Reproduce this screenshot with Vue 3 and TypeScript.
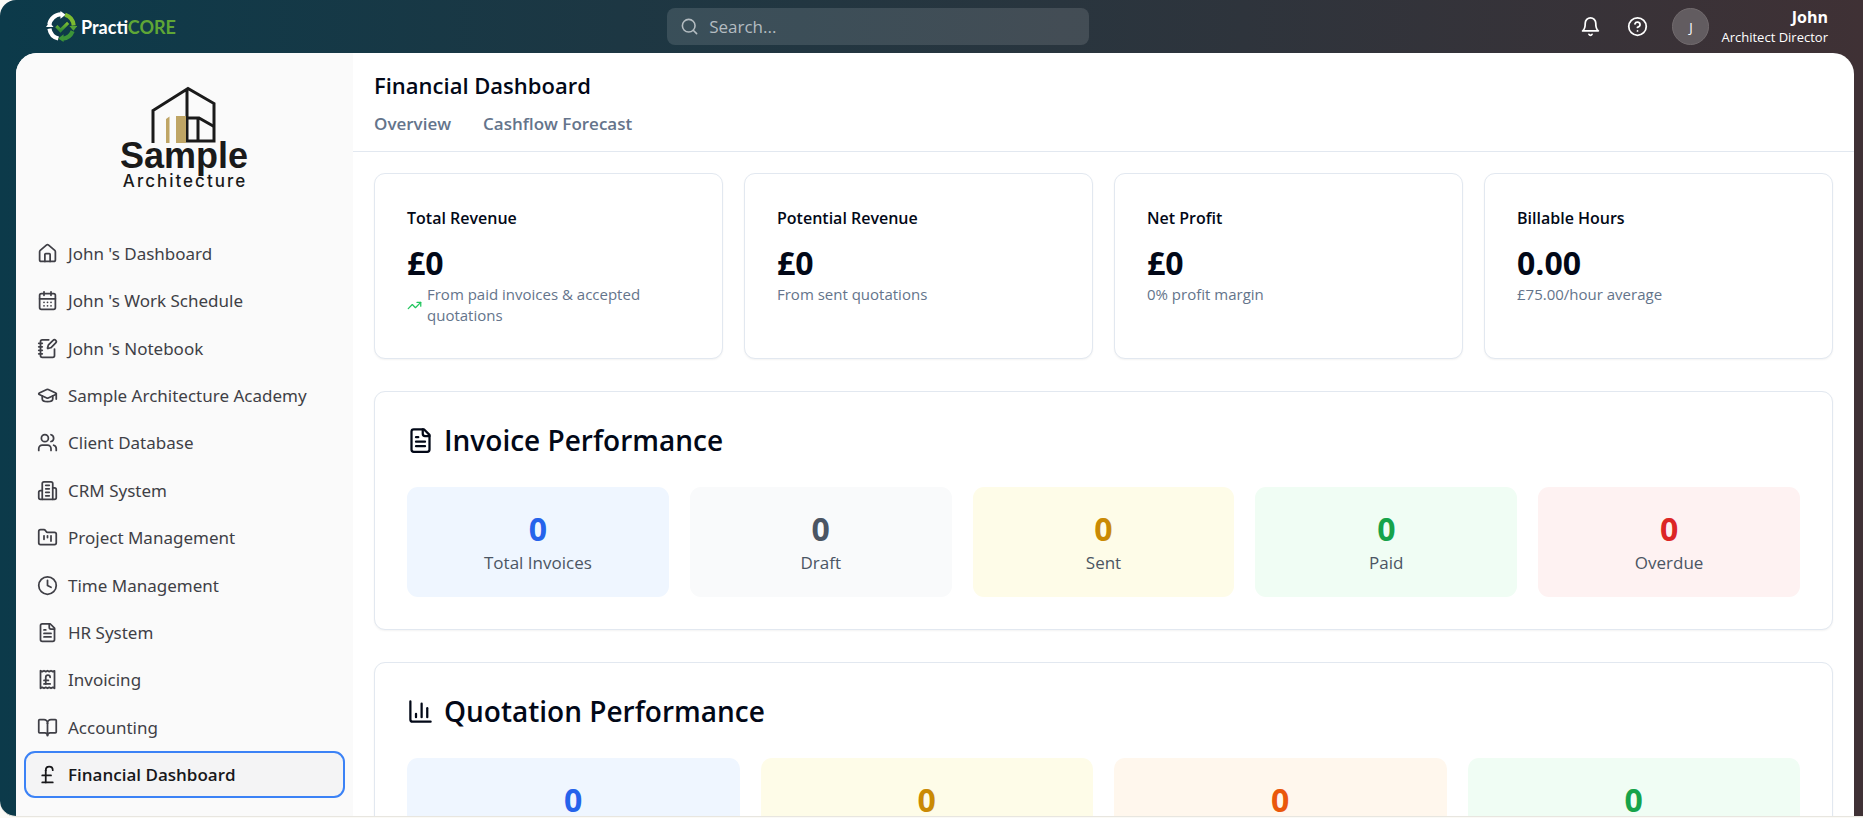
<script setup lang="ts">
import { ref } from 'vue'

interface NavItem {
  label: string
  icon: string[]
}
interface Stat {
  title: string
  value: string
  note: string
  trend?: boolean
}
interface Tile {
  label?: string
  value: number
  tone: string
}
interface Section {
  id: string
  title: string
  icon: string[]
  tiles: Tile[]
}

const fileText: string[] = [
  'M15 2H6a2 2 0 0 0-2 2v16a2 2 0 0 0 2 2h12a2 2 0 0 0 2-2V7Z',
  'M14 2v4a2 2 0 0 0 2 2h4',
  'M10 9H8',
  'M16 13H8',
  'M16 17H8',
]

const navItems: NavItem[] = [
  {
    label: "John 's Dashboard",
    icon: [
      'M15 21v-8a1 1 0 0 0-1-1h-4a1 1 0 0 0-1 1v8',
      'M3 10a2 2 0 0 1 .709-1.528l7-5.999a2 2 0 0 1 2.582 0l7 5.999A2 2 0 0 1 21 10v9a2 2 0 0 1-2 2H5a2 2 0 0 1-2-2z',
    ],
  },
  {
    label: "John 's Work Schedule",
    icon: [
      'M8 2v4', 'M16 2v4',
      'M5 4h14a2 2 0 0 1 2 2v14a2 2 0 0 1-2 2H5a2 2 0 0 1-2-2V6a2 2 0 0 1 2-2z',
      'M3 10h18', 'M8 14h.01', 'M12 14h.01', 'M16 14h.01', 'M8 18h.01', 'M12 18h.01', 'M16 18h.01',
    ],
  },
  {
    label: "John 's Notebook",
    icon: [
      'M13.4 2H6a2 2 0 0 0-2 2v16a2 2 0 0 0 2 2h12a2 2 0 0 0 2-2v-7.4',
      'M2 6h4', 'M2 10h4', 'M2 14h4', 'M2 18h4',
      'M21.378 5.626a1 1 0 1 0-3.004-3.004l-5.01 5.012a2 2 0 0 0-.506.854l-.837 2.87a.5.5 0 0 0 .62.62l2.87-.837a2 2 0 0 0 .854-.506z',
    ],
  },
  {
    label: 'Sample Architecture Academy',
    icon: [
      'M21.42 10.922a1 1 0 0 0-.019-1.838L12.83 5.18a2 2 0 0 0-1.66 0L2.6 9.08a1 1 0 0 0 0 1.832l8.57 3.908a2 2 0 0 0 1.66 0z',
      'M22 10v6', 'M6 12.5V16a6 3 0 0 0 12 0v-3.5',
    ],
  },
  {
    label: 'Client Database',
    icon: [
      'M16 21v-2a4 4 0 0 0-4-4H6a4 4 0 0 0-4 4v2',
      'M9 3a4 4 0 1 0 0 8a4 4 0 1 0 0-8',
      'M22 21v-2a4 4 0 0 0-3-3.87', 'M16 3.13a4 4 0 0 1 0 7.75',
    ],
  },
  {
    label: 'CRM System',
    icon: [
      'M6 22V4a2 2 0 0 1 2-2h8a2 2 0 0 1 2 2v18Z',
      'M6 12H4a2 2 0 0 0-2 2v6a2 2 0 0 0 2 2h2',
      'M18 9h2a2 2 0 0 1 2 2v9a2 2 0 0 1-2 2h-2',
      'M10 6h4', 'M10 10h4', 'M10 14h4', 'M10 18h4',
    ],
  },
  {
    label: 'Project Management',
    icon: [
      'M4 20h16a2 2 0 0 0 2-2V8a2 2 0 0 0-2-2h-7.93a2 2 0 0 1-1.66-.9l-.82-1.2A2 2 0 0 0 7.93 3H4a2 2 0 0 0-2 2v13c0 1.1.9 2 2 2Z',
      'M8 10v4', 'M12 10v2', 'M16 10v6',
    ],
  },
  {
    label: 'Time Management',
    icon: ['M12 2a10 10 0 1 0 0 20a10 10 0 1 0 0-20', 'M12 6v6l4 2'],
  },
  { label: 'HR System', icon: fileText },
  {
    label: 'Invoicing',
    icon: [
      'M4 2v20l2-1 2 1 2-1 2 1 2-1 2 1 2-1 2 1V2l-2 1-2-1-2 1-2-1-2 1-2-1-2 1Z',
      'M8 13h5', 'M10 17V9.5a2.5 2.5 0 0 1 5 0', 'M8 17h7',
    ],
  },
  {
    label: 'Accounting',
    icon: [
      'M12 7v14',
      'M3 18a1 1 0 0 1-1-1V4a1 1 0 0 1 1-1h5a4 4 0 0 1 4 4 4 4 0 0 1 4-4h5a1 1 0 0 1 1 1v13a1 1 0 0 1-1 1h-6a3 3 0 0 0-3 3 3 3 0 0 0-3-3z',
    ],
  },
  {
    label: 'Financial Dashboard',
    icon: ['M18 7c0-5.333-8-5.333-8 0', 'M10 7v14', 'M6 21h12', 'M6 13h10'],
  },
]

const tabs: string[] = ['Overview', 'Cashflow Forecast']

const stats: Stat[] = [
  { title: 'Total Revenue', value: '£0', note: 'From paid invoices & accepted quotations', trend: true },
  { title: 'Potential Revenue', value: '£0', note: 'From sent quotations' },
  { title: 'Net Profit', value: '£0', note: '0% profit margin' },
  { title: 'Billable Hours', value: '0.00', note: '£75.00/hour average' },
]

const sections: Section[] = [
  {
    id: 'invoices',
    title: 'Invoice Performance',
    icon: fileText,
    tiles: [
      { label: 'Total Invoices', value: 0, tone: 'blue' },
      { label: 'Draft', value: 0, tone: 'gray' },
      { label: 'Sent', value: 0, tone: 'yellow' },
      { label: 'Paid', value: 0, tone: 'green' },
      { label: 'Overdue', value: 0, tone: 'red' },
    ],
  },
  {
    id: 'quotations',
    title: 'Quotation Performance',
    icon: ['M3 3v16a2 2 0 0 0 2 2h16', 'M18 17V9', 'M13 17V5', 'M8 17v-3'],
    tiles: [
      { value: 0, tone: 'blue' },
      { value: 0, tone: 'yellow' },
      { value: 0, tone: 'orange' },
      { value: 0, tone: 'green' },
    ],
  },
]

const active = ref('Financial Dashboard')
const query = ref('')
</script>

<template>
  <div class="frame">
    <div class="shell">
      <header class="topbar">
        <a class="brand" href="#" aria-label="PractiCORE">
          <svg class="brand-mark" viewBox="0 0 30 30" fill="none" aria-hidden="true">
            <defs>
              <linearGradient id="leaf" x1="0" y1="0" x2="0" y2="1">
                <stop offset="0" stop-color="#7fbf32" />
                <stop offset="1" stop-color="#2f8a35" />
              </linearGradient>
            </defs>
            <path d="M3.2 13.2A12 12 0 0 1 14.5 3.2" stroke="#fff" stroke-width="4" />
            <path d="M14 0l5 3.6-5 3.8z" fill="#fff" />
            <path d="M12 26.7A12 12 0 0 1 3.3 17" stroke="#fff" stroke-width="4" />
            <path d="M0 15.4l3.3-4.6 4 4.6z" fill="#fff" />
            <path d="M18.5 3.6A12 12 0 0 1 26.8 14" stroke="#7dbb30" stroke-width="4" />
            <path d="M22.6 14.6h7.6l-3.6 4.6z" fill="#56a535" />
            <path d="M25.8 19.5A12 12 0 0 1 16 26.9" stroke="#3c9438" stroke-width="4" />
            <path d="M17 22.6v7.4l-5.2-3.4z" fill="#3c9438" />
            <path d="M10 14.6l4 4.2 7.4-7.4" stroke="url(#leaf)" stroke-width="3" />
          </svg>
          <span class="brand-name">Practi<span class="brand-core">CORE</span></span>
        </a>

        <label class="search">
          <svg class="icon search-icon" viewBox="0 0 24 24" aria-hidden="true">
            <circle cx="11" cy="11" r="8" />
            <path d="m21 21-4.3-4.3" />
          </svg>
          <input v-model="query" type="search" placeholder="Search..." aria-label="Search" />
        </label>

        <div class="account">
          <div class="actions">
            <button class="icon-button" type="button" aria-label="Notifications">
              <svg class="icon" viewBox="0 0 24 24" aria-hidden="true">
                <path d="M6 8a6 6 0 0 1 12 0c0 7 3 9 3 9H3s3-2 3-9" />
                <path d="M10.3 21a1.94 1.94 0 0 0 3.4 0" />
              </svg>
            </button>
            <button class="icon-button" type="button" aria-label="Help">
              <svg class="icon" viewBox="0 0 24 24" aria-hidden="true">
                <circle cx="12" cy="12" r="10" />
                <path d="M9.09 9a3 3 0 0 1 5.83 1c0 2-3 3-3 3" />
                <path d="M12 17h.01" />
              </svg>
            </button>
          </div>
          <button class="avatar" type="button" aria-label="Account">J</button>
          <div class="who">
            <strong>John</strong>
            <span>Architect Director</span>
          </div>
        </div>
      </header>

      <div class="panel">
        <aside class="sidebar">
          <svg class="company" viewBox="0 0 128 108" role="img" aria-label="Sample Architecture">
            <path d="M32 58V25.500L67 3.500L93 18.500V56H66V3.500" class="house" />
            <path d="M66 33H78L93 41.500M77 33V56" class="house" />
            <path d="M45 58V34l3.500-2.500V58zM55 31H65V58H55z" class="gold" />
            <text x="63" y="83" class="company-name">Sample</text>
            <text x="64" y="102" class="company-kind">Architecture</text>
          </svg>
          <nav class="menu" aria-label="Main">
            <a
              v-for="item in navItems"
              :key="item.label"
              href="#"
              class="menu-item"
              :class="{ active: item.label === active }"
              :aria-current="item.label === active ? 'page' : undefined"
              @click.prevent="active = item.label"
            >
              <svg class="icon" viewBox="0 0 24 24" aria-hidden="true">
                <path v-for="d in item.icon" :key="d" :d="d" />
              </svg>
              <span>{{ item.label }}</span>
            </a>
          </nav>
        </aside>

        <main class="main">
          <header class="page-head">
            <h1>Financial Dashboard</h1>
            <nav class="tabs" aria-label="Views">
              <a v-for="tab in tabs" :key="tab" href="#">{{ tab }}</a>
            </nav>
          </header>

          <div class="content">
            <div class="stats">
              <article v-for="stat in stats" :key="stat.title" class="card">
                <h2 class="stat-title">{{ stat.title }}</h2>
                <div class="figure">{{ stat.value }}</div>
                <p class="note">
                  <svg v-if="stat.trend" class="icon trend" viewBox="0 0 24 24" aria-hidden="true">
                    <path d="M22 7 13.500 15.500 8.500 10.500 2 17" />
                    <path d="M16 7h6v6" />
                  </svg>
                  <span>{{ stat.note }}</span>
                </p>
              </article>
            </div>

            <section v-for="section in sections" :key="section.id" class="card">
              <h2 class="section-title">
                <svg class="icon" viewBox="0 0 24 24" aria-hidden="true">
                  <path v-for="d in section.icon" :key="d" :d="d" />
                </svg>
                {{ section.title }}
              </h2>
              <div class="tiles">
                <div v-for="tile in section.tiles" :key="tile.tone" class="tile" :class="tile.tone">
                  <div class="figure">{{ tile.value }}</div>
                  <div v-if="tile.label" class="tile-label">{{ tile.label }}</div>
                </div>
              </div>
            </section>
          </div>
        </main>
      </div>
    </div>
  </div>
</template>

<style>
body {
  margin: 0;
  background: #fbfaf6;
}
</style>

<style scoped>
* {
  box-sizing: border-box;
}
.frame {
  height: 100vh;
  display: flex;
  flex-direction: column;
  padding-bottom: 1px;
  font-family: 'Open Sans', 'Noto Sans', sans-serif;
  color: #020817;
}
a {
  color: inherit;
  text-decoration: none;
}
h1,
h2,
p {
  margin: 0;
}
button,
input {
  font: inherit;
}
.icon {
  flex: none;
  width: 21px;
  height: 21px;
  fill: none;
  stroke: currentColor;
  stroke-width: 2;
  stroke-linecap: round;
  stroke-linejoin: round;
}
.shell {
  flex: 1;
  min-height: 0;
  display: flex;
  flex-direction: column;
  overflow: hidden;
  border-bottom: 1px solid #e8e6e0;
  border-radius: 16px 0 0 16px;
  background: linear-gradient(90deg, #0c3a4a, #3f3135);
}

/* Top bar */
.topbar {
  flex: none;
  height: 53px;
  display: flex;
  align-items: center;
  justify-content: space-between;
  padding: 0 35px 0 46px;
  color: #fff;
}
.brand {
  display: flex;
  align-items: center;
  gap: 4px;
}
.brand-mark {
  width: 31px;
  height: 31px;
}
.brand-name {
  font-family: Lato, 'Open Sans', sans-serif;
  font-size: 18px;
  font-weight: 700;
  line-height: 26px;
}
.brand-core {
  color: #5fa636;
}
.search {
  width: 422px;
  height: 37px;
  display: flex;
  align-items: center;
  gap: 10px;
  padding: 0 13px;
  border-radius: 8px;
  background: rgba(255, 255, 255, 0.12);
  color: #b4bcc1;
}
.search-icon {
  width: 19px;
  height: 19px;
}
.search input {
  flex: 1;
  min-width: 0;
  padding: 0;
  border: 0;
  outline: 0;
  background: none;
  color: #fff;
  font-size: 17px;
}
.search input::placeholder {
  color: #b4bcc1;
  opacity: 1;
}
.account {
  display: flex;
  align-items: center;
}
.actions {
  display: flex;
  gap: 26px;
  margin-right: 24px;
}
.icon-button {
  display: flex;
  padding: 0;
  border: 0;
  background: none;
  color: #fff;
}
.avatar {
  width: 37px;
  height: 37px;
  margin-right: 12px;
  padding: 0;
  border: 1px solid #726b6e;
  border-radius: 50%;
  background: #625c60;
  color: #fff;
  font-size: 13px;
}
.who {
  display: flex;
  flex-direction: column;
  align-items: flex-end;
  font-size: 13px;
  line-height: 20px;
}
.who strong {
  font-size: 16px;
}

/* Panel */
.panel {
  flex: 1;
  min-height: 0;
  display: flex;
  overflow: hidden;
  margin: 0 9px 0 16px;
  border-radius: 21px 21px 0 0;
  background: #fff;
}
.sidebar {
  flex: none;
  width: 337px;
  display: flex;
  flex-direction: column;
  padding: 32px 8px 18px;
  background: #fafafa;
  color: #3f3f46;
}
.company {
  flex: none;
  align-self: center;
  width: 128px;
  height: 108px;
  margin-bottom: 37px;
}
.house {
  fill: none;
  stroke: #1a1a1a;
  stroke-width: 3;
}
.gold {
  fill: #bfa565;
}
.company-name {
  fill: #1a1a1a;
  font: 700 36px 'Liberation Sans', Arial, sans-serif;
  text-anchor: middle;
}
.company-kind {
  fill: #1a1a1a;
  font: 500 17px Inter, 'Liberation Sans', sans-serif;
  letter-spacing: 2px;
  text-anchor: middle;
}
.menu {
  flex: 1;
  display: flex;
  flex-direction: column;
  justify-content: space-between;
}
.menu-item {
  display: flex;
  align-items: center;
  gap: 10px;
  padding: 8px 11px;
  border: 2px solid transparent;
  border-radius: 11px;
  font-family: 'Noto Sans', 'Open Sans', sans-serif;
  font-size: 17px;
  line-height: 27px;
}
.menu-item.active {
  border-color: #3b82f6;
  background: #f4f4f5;
  color: #18181b;
  font-family: 'Open Sans', 'Noto Sans', sans-serif;
  font-weight: 600;
}

/* Page */
.main {
  flex: 1;
  min-width: 0;
  overflow: hidden;
}
.page-head {
  padding: 16px 21px 13px;
  border-bottom: 1px solid #e2e8f0;
}
h1 {
  font-size: 22px;
  font-weight: 600;
  line-height: 32px;
}
.tabs {
  display: flex;
  gap: 32px;
  margin-top: 9px;
  color: #64748b;
  font-size: 17px;
  font-weight: 600;
  line-height: 28px;
}
.content {
  display: flex;
  flex-direction: column;
  gap: 32px;
  padding: 21px;
}
.stats {
  display: grid;
  grid-template-columns: repeat(4, minmax(0, 1fr));
  gap: 21px;
}
.card {
  padding: 32px;
  border: 1px solid #e2e8f0;
  border-radius: 11px;
  background: #fff;
  box-shadow: 0 1px 2px rgba(0, 0, 0, 0.05);
}
.stat-title {
  margin-bottom: 12px;
  font-size: 16px;
  font-weight: 600;
  line-height: 24px;
}
.figure {
  font-size: 32px;
  font-weight: 700;
  line-height: 42px;
}
.note {
  display: flex;
  align-items: center;
  gap: 5px;
  color: #64748b;
  font-size: 15px;
  line-height: 21px;
}
.trend {
  width: 15px;
  height: 15px;
  color: #22c55e;
}
.section-title {
  display: flex;
  align-items: center;
  gap: 10px;
  margin-bottom: 31px;
  font-size: 28px;
  font-weight: 600;
  line-height: 32px;
}
.section-title .icon {
  width: 27px;
  height: 27px;
}
.tiles {
  display: grid;
  grid-auto-flow: column;
  grid-auto-columns: minmax(0, 1fr);
  gap: 21px;
}
.tile {
  padding: 21px;
  border-radius: 11px;
  text-align: center;
}
.tile-label {
  color: #4b5563;
  font-size: 17px;
  line-height: 26px;
}
.blue { background: #eff6ff; }
.blue .figure { color: #2563eb; }
.gray { background: #f9fafb; }
.gray .figure { color: #4b5563; }
.yellow { background: #fefce8; }
.yellow .figure { color: #ca8a04; }
.green { background: #f0fdf4; }
.green .figure { color: #16a34a; }
.red { background: #fef2f2; }
.red .figure { color: #dc2626; }
.orange { background: #fff7ed; }
.orange .figure { color: #ea580c; }
</style>
